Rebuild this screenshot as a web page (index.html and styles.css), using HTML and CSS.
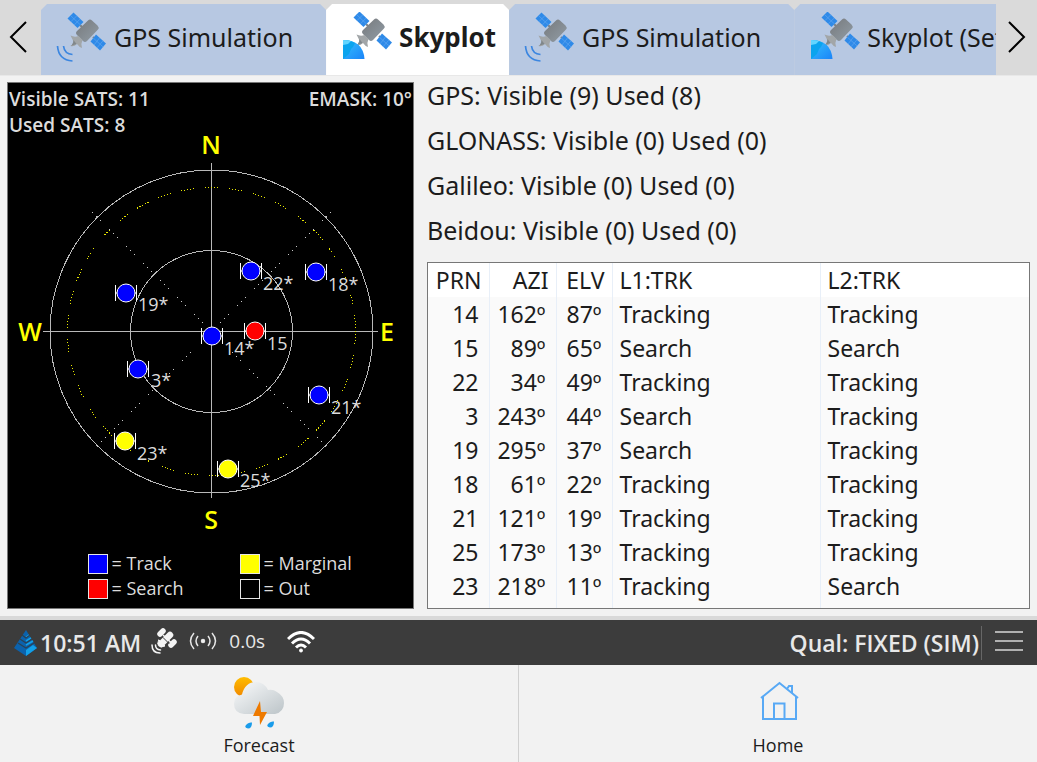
FILE: index.html
```html
<!DOCTYPE html>
<html lang="en">
<head>
  <meta charset="UTF-8">
  <meta name="viewport" content="width=device-width, initial-scale=1.0">
  <title>Skyplot</title>
  <link rel="stylesheet" href="styles.css">
</head>
<body>
  <!-- shared icon shapes -->
  <svg class="defs" width="0" height="0" aria-hidden="true">
    <defs>
      <linearGradient id="body-grad" x1="0" y1="0" x2="1" y2="1">
        <stop offset="0" stop-color="#76797c"/>
        <stop offset="1" stop-color="#929da6"/>
      </linearGradient>
      <linearGradient id="earth-grad" x1="0" y1="0" x2="1" y2="1">
        <stop offset="0" stop-color="#35c3ff"/>
        <stop offset="1" stop-color="#1b84f8"/>
      </linearGradient>
      <linearGradient id="sun-grad" x1="0" y1="0" x2="0" y2="1">
        <stop offset="0" stop-color="#ffbd00"/>
        <stop offset="1" stop-color="#f08700"/>
      </linearGradient>
      <linearGradient id="cloud-grad" x1="0" y1="0" x2="1" y2="1">
        <stop offset="0" stop-color="#fafbfc"/>
        <stop offset="1" stop-color="#bcc4c8"/>
      </linearGradient>
      <symbol id="satellite" viewBox="0 0 50 50">
        <path d="M24 13l4 4M37 25l3 3" stroke="#7d8284" stroke-width="2"/>
        <path d="M17.500 0.500L11.500 6.500 21.500 16 27.500 10z" fill="#2f8ae8"/>
        <path d="M40 22.500L50 31.500 44 38.500 34.500 29.500z" fill="#2f8ae8"/>
        <path d="M14.500 3.500l10 9.500M14.800 9.800l6-6M18.200 13l6-6M37.200 26l10 9M38 33l5.500-7M41 35.800l6-7" stroke="#64aaf2" stroke-width="0.600"/>
        <path d="M32 8.500q2-2 4 0l5.500 5q2 2 0.500 4L31 29q-2 2-4 0l-6-6q-2-2 0-4z" fill="url(#body-grad)"/>
        <path d="M14.500 23.500q4 2 8 0.500l4 4q-2 4-0.500 8-3-1-5-4-3 3-6.500 2 3-2 2.500-5.500z" fill="#a2a6a8"/>
        <path d="M14.500 34q3-2 3-6l3 4z" fill="#80878b"/>
      </symbol>
      <symbol id="sim-icon" viewBox="0 0 50 50">
        <use href="#satellite" width="50" height="50"/>
        <path d="M1.500 34q1 14 15 15M7.500 34q1 8 9 8.500" fill="none" stroke="#3b86e0" stroke-width="1.700"/>
      </symbol>
      <symbol id="sky-icon" viewBox="0 0 50 50">
        <use href="#satellite" x="-1" y="-1" width="50" height="50"/>
        <path d="M0 28q20 0 21.500 19H0z" fill="url(#earth-grad)"/>
        <path d="M0 28q7 0 12 3l-2 4-2 2-2 5-6 5z" fill="#0ba4ee"/>
        <path d="M0 28q5 0 8 1l-3 3-5 1z" fill="#62d5ff"/>
      </symbol>
      <symbol id="sat" viewBox="-12 -12 24 24">
        <path d="M-10.500-8V8M10.500-8V8M-10.500 0H10.500" stroke="#fff" stroke-width="1"/>
        <circle r="9" stroke="#fff" stroke-width="1"/>
      </symbol>
    </defs>
  </svg>

  <header class="tab-bar">
    <button class="tab-arrow prev" aria-label="Previous tabs">
      <svg width="18" height="34" viewBox="0 0 18 34"><path d="M17 2L2 17 17 32"/></svg>
    </button>
    <nav class="tabs">
      <button class="tab"><svg class="tab-icon"><use href="#sim-icon"/></svg>GPS Simulation</button>
      <button class="tab sky active"><svg class="tab-icon"><use href="#sky-icon"/></svg>Skyplot</button>
      <button class="tab"><svg class="tab-icon"><use href="#sim-icon"/></svg>GPS Simulation</button>
      <button class="tab sky"><svg class="tab-icon"><use href="#sky-icon"/></svg>Skyplot (Settings)</button>
    </nav>
    <button class="tab-arrow" aria-label="Next tabs">
      <svg width="18" height="34" viewBox="0 0 18 34"><path d="M1 2L16 17 1 32"/></svg>
    </button>
  </header>

  <main>
    <section class="skyplot">
      <div class="plot-info">
        <p>Visible SATS: 11<br>Used SATS: 8</p>
        <p>EMASK: 10°</p>
      </div>
      <svg class="plot" viewBox="8 132 405 404">
        <g class="rings">
          <circle cx="211.500" cy="331.500" r="161.500"/>
          <circle cx="211.500" cy="331.500" r="81"/>
          <path d="M211.500 163V498M43 331.500H378"/>
        </g>
        <path class="diagonal" d="M92 212L331 451M331 212L92 451"/>
        <circle class="mask" cx="211.500" cy="331.500" r="144"/>
        <g class="compass">
          <text x="211" y="154">N</text>
          <text x="211" y="529">S</text>
          <text x="30" y="341">W</text>
          <text x="387" y="341">E</text>
        </g>
        <g class="sats">
          <use href="#sat" class="track" x="239" y="259" width="24" height="24"/>
          <text x="263" y="290">22*</text>
          <use href="#sat" class="track" x="304" y="260" width="24" height="24"/>
          <text x="328" y="291">18*</text>
          <use href="#sat" class="track" x="114" y="281" width="24" height="24"/>
          <text x="138" y="311">19*</text>
          <use href="#sat" class="search" x="243" y="319" width="24" height="24"/>
          <text x="267" y="350">15</text>
          <use href="#sat" class="track" x="200" y="324" width="24" height="24"/>
          <text x="224" y="355">14*</text>
          <use href="#sat" class="track" x="126" y="357" width="24" height="24"/>
          <text x="151" y="387">3*</text>
          <use href="#sat" class="track" x="307" y="383" width="24" height="24"/>
          <text x="331" y="414">21*</text>
          <use href="#sat" class="marginal" x="113" y="429" width="24" height="24"/>
          <text x="137" y="460">23*</text>
          <use href="#sat" class="marginal" x="216" y="457" width="24" height="24"/>
          <text x="240" y="487">25*</text>
        </g>
      </svg>
      <ul class="legend">
        <li><span class="swatch track"></span>= Track</li>
        <li><span class="swatch marginal"></span>= Marginal</li>
        <li><span class="swatch search"></span>= Search</li>
        <li><span class="swatch"></span>= Out</li>
      </ul>
    </section>

    <section class="details">
      <div class="systems">
        <p>GPS: Visible (9) Used (8)</p>
        <p>GLONASS: Visible (0) Used (0)</p>
        <p>Galileo: Visible (0) Used (0)</p>
        <p>Beidou: Visible (0) Used (0)</p>
      </div>
      <div class="table-box">
        <table>
          <colgroup>
            <col class="col-prn"><col class="col-azi"><col class="col-elv"><col class="col-trk"><col>
          </colgroup>
          <thead>
            <tr><th>PRN</th><th>AZI</th><th>ELV</th><th>L1:TRK</th><th>L2:TRK</th></tr>
          </thead>
          <tbody>
            <tr><td>14</td><td>162º</td><td>87º</td><td>Tracking</td><td>Tracking</td></tr>
            <tr><td>15</td><td>89º</td><td>65º</td><td>Search</td><td>Search</td></tr>
            <tr><td>22</td><td>34º</td><td>49º</td><td>Tracking</td><td>Tracking</td></tr>
            <tr><td>3</td><td>243º</td><td>44º</td><td>Search</td><td>Tracking</td></tr>
            <tr><td>19</td><td>295º</td><td>37º</td><td>Search</td><td>Tracking</td></tr>
            <tr><td>18</td><td>61º</td><td>22º</td><td>Tracking</td><td>Tracking</td></tr>
            <tr><td>21</td><td>121º</td><td>19º</td><td>Tracking</td><td>Tracking</td></tr>
            <tr><td>25</td><td>173º</td><td>13º</td><td>Tracking</td><td>Tracking</td></tr>
            <tr><td>23</td><td>218º</td><td>11º</td><td>Tracking</td><td>Search</td></tr>
          </tbody>
        </table>
      </div>
    </section>
  </main>

  <div class="status-bar">
    <svg class="logo" width="24" height="28" viewBox="0 0 24 28">
      <path d="M12 1L0 19 12 27 23 19z" fill="#0b62ad"/>
      <path d="M12 21L19 16 23 19 12 27z" fill="#12a0e8"/>
      <path d="M12 16l7-4M12 12l5-3M12 8l3-2" stroke="#12a0e8" stroke-width="1.500"/>
      <path d="M4 14l8 5 8-5M6 10l6 4 6-4M8 6l4 3 4-3" fill="none" stroke="#2b4254" stroke-width="1.200"/>
    </svg>
    <span class="time">10:51 AM</span>
    <svg class="status-sat" width="26" height="26" viewBox="0 0 26 26" fill="none" stroke="#f4f4f4" stroke-linecap="round">
      <path d="M9 6l3-3M20 17l3-3" stroke-width="5.500"/>
      <path d="M10 16L19 7" stroke-width="6.500"/>
      <path d="M12.500 7.500L20 14.500" stroke-width="1.500"/>
      <path d="M12 9.500l6 6" stroke="#3c3c3c" stroke-width="1"/>
      <path d="M8 12l6 6-4 1-3-3z" fill="#f4f4f4" stroke-width="1"/>
      <path d="M4.500 17q0 4.500 5 5M1 17q0 8 8 8" stroke-width="1.500"/>
    </svg>
    <svg class="status-radio" width="28" height="20" viewBox="0 0 28 20" fill="none" stroke="#e6e6e6" stroke-width="1.500">
      <path d="M5 2Q-2 10 5 18M23 2q7 8 0 16M9 5q-4 5 0 10M19 5q4 5 0 10"/>
      <circle cx="14" cy="10" r="1.500" fill="#fff"/>
    </svg>
    <span class="age">0.0s</span>
    <svg class="status-wifi" width="28" height="22" viewBox="0 0 28 22" fill="none" stroke="#fff" stroke-width="3">
      <path d="M1 8q13-13 26 0M5 12.500q9-9 18 0M9 16.500q5-5 10 0"/>
      <circle cx="14" cy="19.500" r="1.500" fill="#fff" stroke-width="1"/>
    </svg>
    <span class="quality">Qual: FIXED (SIM)</span>
    <button class="menu-btn" aria-label="Menu">
      <svg width="28" height="22" viewBox="0 0 28 22"><path d="M0 2H28M0 11H28M0 20H28" stroke="#b0b0b0" stroke-width="2"/></svg>
    </button>
  </div>

  <footer>
    <button class="nav-btn">
      <svg width="52" height="52" viewBox="0 0 52 52">
        <circle cx="11" cy="10" r="10" fill="url(#sun-grad)"/>
        <path d="M11 37Q1 36 1 27 1 19 9 17.500 12 5 23 5q8 0 12 8 5-1 9 2 7 4 7 11 0 9-9 11z" fill="url(#cloud-grad)"/>
        <path d="M27 24L20 39h6.500L27 48 34 35h-6z" fill="#ee7a00"/>
        <path d="M19 45.500q0 6-4 6-5-1-1-4.500 2-2 5-1.500zM41 44.500q0 6-4 6-5-1-1-4.500 2-2 5-1.500z" fill="#1a9cea"/>
      </svg>
      Forecast
    </button>
    <button class="nav-btn">
      <svg width="52" height="52" viewBox="0 0 52 52" fill="none" stroke="#58a9f5" stroke-width="2">
        <path d="M11 20v22h33V20M9 21L27.500 6 46 21M22 42V26.500h10.500V42M35 12l2-3h3v7"/>
      </svg>
      Home
    </button>
  </footer>
</body>
</html>
```

FILE: styles.css
```css
* {
  box-sizing: border-box;
}

body {
  margin: 0;
  min-height: 100vh;
  display: flex;
  flex-direction: column;
  background-color: #f2f2f2;
  color: #1c1c1c;
  font-family: "Noto Sans", sans-serif;
}

p, ul {
  margin: 0;
  padding: 0;
}

button {
  border: none;
  padding: 0;
  background: none;
  color: inherit;
  font: inherit;
  cursor: pointer;
}

.defs {
  position: absolute;
}

/* tabs */
.tab-bar {
  display: flex;
  height: 76px;
  padding-top: 4px;
  background-color: #dadada;
  border-bottom: 1px solid #e8e8e8;
}

.tab-arrow {
  flex: none;
  width: 41px;
}

.tab-arrow.prev {
  padding-right: 6px;
}

.tab-arrow path {
  fill: none;
  stroke: #000;
  stroke-width: 2;
}

.tabs {
  flex: 1;
  display: flex;
  overflow: hidden;
}

.tab {
  flex: none;
  display: flex;
  align-items: center;
  gap: 8px;
  padding: 0 33px 5px 15px;
  background-color: #b7c8e2;
  font-size: 25px;
  white-space: nowrap;
  clip-path: polygon(0 6px, 6px 0, calc(100% - 6px) 0, 100% 6px, 100% 100%, 0 100%);
}

.tab.sky {
  gap: 6px;
  padding-left: 17px;
}

.tab.active {
  padding-right: 13px;
  background-color: #fff;
  font-size: 26px;
  font-weight: bold;
}

.tab-icon {
  width: 50px;
  height: 50px;
}

/* content */
main {
  flex: 1;
  display: flex;
  gap: 13px;
  padding: 0 7px 7px;
}

.skyplot {
  flex: 0 1 407px;
  margin-top: 6px;
  background-color: #000;
  border: 1px solid #777;
  color: #dcdcdc;
  font-family: "Open Sans", sans-serif;
}

.plot-info {
  display: flex;
  justify-content: space-between;
  height: 49px;
  padding: 3px 1px 0;
  font-size: 19px;
  font-weight: 600;
  line-height: 26px;
}

.plot {
  display: block;
  width: 100%;
  overflow: visible;
}

.rings {
  fill: none;
  stroke: #b9b9b9;
  shape-rendering: crispEdges;
}

.diagonal {
  stroke: #c8c8c8;
  stroke-dasharray: 1 5;
  shape-rendering: crispEdges;
}

.mask {
  fill: none;
  stroke: #e6e600;
  stroke-dasharray: 1 2 1 2 1 2 1 2 1 11;
  shape-rendering: crispEdges;
}

.compass {
  fill: #ff0;
  font-size: 25px;
  font-weight: 600;
  text-anchor: middle;
}

.sats text {
  fill: #dcdcdc;
  font-size: 18px;
  font-weight: 500;
}

.track {
  fill: #00f;
  background-color: #00f;
}

.search {
  fill: #f00;
  background-color: #f00;
}

.marginal {
  fill: #ff0;
  background-color: #ff0;
}

.legend {
  display: grid;
  grid-template-columns: 152px 152px;
  justify-content: center;
  padding: 15px 0 0 58px;
  list-style: none;
  font-size: 18px;
  line-height: 25px;
}

.legend li {
  display: flex;
  align-items: center;
  gap: 4px;
}

.swatch {
  width: 20px;
  height: 20px;
  border: 1px solid #e6e6e6;
}

.details {
  flex: 1;
  display: flex;
  flex-direction: column;
}

/* pulls the readout lines up against the tabs */
.systems {
  margin-top: -3px;
  font-size: 25px;
  line-height: 45px;
}

.table-box {
  flex: 1;
  margin-top: 9px;
  border: 1px solid #777;
  background-color: #fafafa;
}

table {
  width: 100%;
  table-layout: fixed;
  border-collapse: collapse;
  font-size: 23px;
  line-height: 34px;
}

.col-prn {
  width: 61px;
}

.col-azi {
  width: 67px;
}

.col-elv {
  width: 56px;
}

.col-trk {
  width: 208px;
}

th, td {
  padding: 0 7px;
  border-right: 1px solid #e8eff8;
  font-weight: normal;
  text-align: left;
}

th {
  background-color: #fff;
}

th:nth-child(-n+3) {
  padding: 0 7px 0 0;
  text-align: right;
}

td:nth-child(-n+3) {
  padding: 0 10px 0 0;
  text-align: right;
}

tbody tr:last-child td {
  padding-bottom: 5px;
}

th:last-child, td:last-child {
  border-right: none;
}

/* status bar */
.status-bar {
  display: flex;
  align-items: center;
  height: 49px;
  padding: 0 14px;
  background-color: #3c3c3c;
  border-top: 4px solid #d9d9d9;
  color: #e8e8e8;
  font-family: "Open Sans", sans-serif;
  font-size: 23px;
  font-weight: 600;
}

.time {
  margin-left: 2px;
}

.status-sat {
  margin: 0 12px 4px 10px;
}

.status-radio {
  margin-bottom: 4px;
}

.age {
  margin: 0 22px 4px 12px;
  font-size: 19px;
  font-weight: 500;
}

.status-wifi {
  margin-bottom: 2px;
}

.quality {
  margin-left: auto;
}

.menu-btn {
  height: 34px;
  margin-left: 2px;
  padding-left: 13px;
  border-left: 1px solid #666;
}

/* bottom buttons */
footer {
  display: flex;
  height: 97px;
}

.nav-btn {
  flex: 1;
  display: flex;
  flex-direction: column;
  align-items: center;
  gap: 4px;
  padding-bottom: 1px;
  font-family: "Open Sans", sans-serif;
  font-size: 18px;
  line-height: 24px;
}

.nav-btn svg {
  margin-top: 12px;
}

.nav-btn + .nav-btn {
  border-left: 1px solid #d0d0d0;
}
```
